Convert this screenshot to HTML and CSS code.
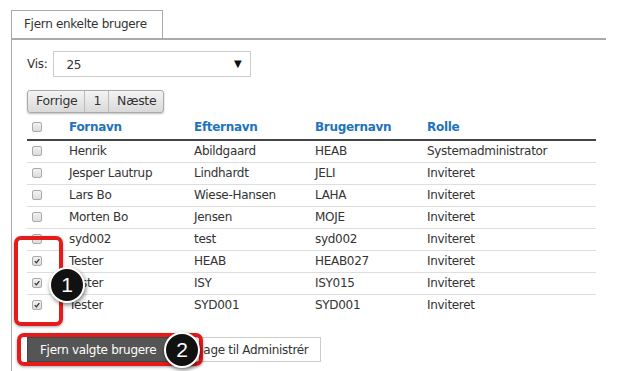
FILE: index.html
```html
<!DOCTYPE html>
<html lang="da">
<head>
  <meta charset="UTF-8">
  <title>Fjern enkelte brugere</title>
  <link rel="stylesheet" href="styles.css">
</head>
<body>

  <div class="page">
    <div class="tabs">
      <div class="tab">Fjern enkelte brugere</div>
    </div>

    <div class="panel">
      <div class="show-row">
        <span class="show-label">Vis:</span>
        <div class="select">25<span class="arrow">▼</span></div>
      </div>

      <div class="pager">
        <span class="pager-btn">Forrige</span>
        <span class="pager-btn">1</span>
        <span class="pager-btn">Næste</span>
      </div>

      <table class="users">
        <colgroup>
          <col class="c-check">
          <col class="c-first">
          <col class="c-last">
          <col class="c-user">
          <col class="c-role">
        </colgroup>
        <thead>
          <tr>
            <th><span class="cb"></span></th>
            <th>Fornavn</th>
            <th>Efternavn</th>
            <th>Brugernavn</th>
            <th>Rolle</th>
          </tr>
        </thead>
        <tbody>
          <tr><td><span class="cb"></span></td><td>Henrik</td><td>Abildgaard</td><td>HEAB</td><td>Systemadministrator</td></tr>
          <tr><td><span class="cb"></span></td><td>Jesper Lautrup</td><td>Lindhardt</td><td>JELI</td><td>Inviteret</td></tr>
          <tr><td><span class="cb"></span></td><td>Lars Bo</td><td>Wiese-Hansen</td><td>LAHA</td><td>Inviteret</td></tr>
          <tr><td><span class="cb"></span></td><td>Morten Bo</td><td>Jensen</td><td>MOJE</td><td>Inviteret</td></tr>
          <tr><td><span class="cb"></span></td><td>syd002</td><td>test</td><td>syd002</td><td>Inviteret</td></tr>
          <tr><td><span class="cb checked"><svg viewBox="0 0 10 10"><path d="M2.2 5.2 L4.2 7.3 L7.9 2.6" /></svg></span></td><td>Tester</td><td>HEAB</td><td>HEAB027</td><td>Inviteret</td></tr>
          <tr><td><span class="cb checked"><svg viewBox="0 0 10 10"><path d="M2.2 5.2 L4.2 7.3 L7.9 2.6" /></svg></span></td><td>Tester</td><td>ISY</td><td>ISY015</td><td>Inviteret</td></tr>
          <tr><td><span class="cb checked"><svg viewBox="0 0 10 10"><path d="M2.2 5.2 L4.2 7.3 L7.9 2.6" /></svg></span></td><td>Tester</td><td>SYD001</td><td>SYD001</td><td>Inviteret</td></tr>
        </tbody>
      </table>

      <div class="actions">
        <button class="btn btn-dark">Fjern valgte brugere</button>
        <button class="btn btn-light">Tilbage til Administrér</button>
      </div>
    </div>

    <!-- callouts drawn over the screenshot -->
    <div class="mark mark-1"></div>
    <div class="mark mark-2"></div>
    <div class="badge badge-1">1</div>
    <div class="badge badge-2">2</div>
  </div>

</body>
</html>
```

FILE: styles.css
```css
* {
  box-sizing: border-box;
}

body {
  margin: 0;
  padding: 0;
  background: #fff;
  font-family: "DejaVu Sans", Verdana, sans-serif;
  font-size: 12px;
  letter-spacing: -0.3px;
  color: #333;
}

.page {
  position: relative;
  padding: 10px 0 0 11px;
  width: 606px;
  height: 371px;
  overflow: hidden;
}

.tabs {
  display: flex;
}

.tab {
  width: 152px;
  height: 29px;
  padding: 6px 0 0 12px;
  border: 1px solid #aaa;
  border-bottom: none;
}

.panel {
  border-top: 2px solid #aaa;
  border-left: 1px solid #aaa;
  margin-top: -1px;
  padding: 11px 0 30px 15px;
}

.show-row {
  display: flex;
  align-items: center;
  gap: 6px;
}

.select {
  position: relative;
  width: 198px;
  height: 26px;
  padding: 6px 0 0 12px;
  border: 1px solid #ccc;
}

.arrow {
  position: absolute;
  right: 9px;
  top: 6px;
  font-size: 10px;
  color: #111;
}

.pager {
  display: inline-flex;
  margin-top: 13px;
  border: 1px solid #aaa;
  border-radius: 3px;
  background: linear-gradient(#f4f4f4, #d9d9d9);
  box-shadow: 0 1px 2px rgba(0, 0, 0, 0.25);
  height: 23px;
  font-size: 12.5px;
}

.pager-btn {
  padding: 2px 7px 0 8px;
  border-left: 1px solid #bbb;
}

.pager-btn:first-child {
  border-left: none;
}

.users {
  width: 569px;
  border-collapse: collapse;
}

.c-check { width: 37px; }
.c-first { width: 125px; }
.c-last { width: 121px; }
.c-user { width: 112px; }
.c-role { width: 174px; }

.users th {
  height: 27px;
  padding: 2px 5px 0;
  text-align: left;
  color: #1e73be;
  font-weight: bold;
  border-bottom: 2px solid #444;
}

.users td {
  height: 22px;
  padding: 0 5px;
  border-bottom: 1px solid #ddd;
}

.users tbody tr:last-child td {
  border-bottom: none;
}

.cb {
  display: block;
  width: 10px;
  height: 10px;
  border: 1px solid #aaa;
  border-radius: 2px;
  background: linear-gradient(#f2f2f2, #dcdcdc);
}

.cb svg {
  display: block;
  width: 8px;
  height: 8px;
}

.cb svg path {
  fill: none;
  stroke: #333;
  stroke-width: 1.6;
}

.actions {
  display: flex;
  gap: 2px;
  margin-top: 21px;
}

.btn {
  height: 25px;
  padding: 0 12px;
  font-family: "DejaVu Sans", Verdana, sans-serif;
  font-size: 12px;
  letter-spacing: -0.3px;
  border-radius: 0;
  cursor: pointer;
}

.btn-dark {
  background: #555;
  color: #fff;
  border: 1px solid #444;
}

.btn-light {
  padding: 0 11px;
  background: #fff;
  color: #333;
  border: 1px solid #ccc;
}

/* annotations */
.mark {
  position: absolute;
  border: 4px solid #e31b1b;
  border-radius: 7px;
  box-shadow: 0 1px 3px rgba(0, 0, 0, 0.35);
}

.mark-1 {
  left: 14px;
  top: 236px;
  width: 49px;
  height: 90px;
}

.mark-2 {
  left: 17px;
  top: 333px;
  width: 186px;
  height: 33px;
}

.badge {
  position: absolute;
  width: 36px;
  height: 36px;
  border: 2px solid #fff;
  border-radius: 50%;
  background: #111;
  color: #fff;
  font-family: "Liberation Sans", Arial, sans-serif;
  font-size: 21px;
  letter-spacing: 0;
  line-height: 32px;
  text-align: center;
  box-shadow: 1px 2px 4px rgba(0, 0, 0, 0.5);
}

.badge-1 {
  left: 49px;
  top: 267px;
}

.badge-2 {
  left: 164px;
  top: 332px;
}
```
